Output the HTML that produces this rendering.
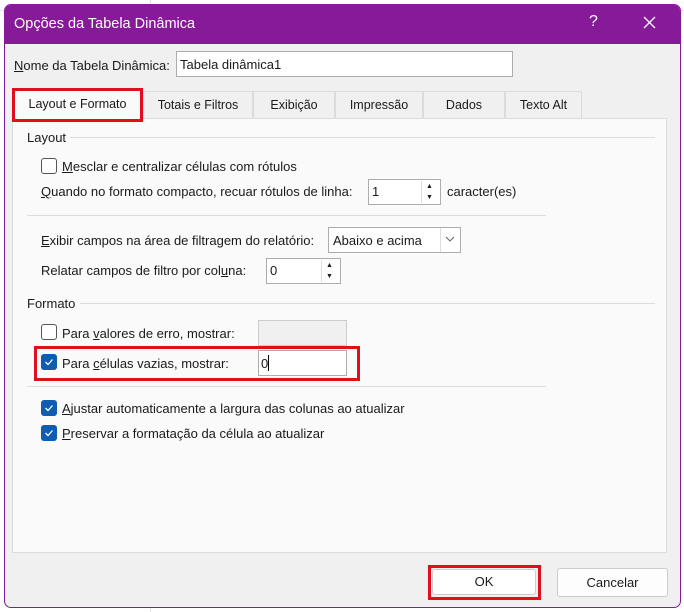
<!DOCTYPE html>
<html><head><meta charset="utf-8"><style>
*{margin:0;padding:0;box-sizing:border-box}
body{width:684px;height:612px;position:relative;overflow:hidden;background:#fff;font-family:"Liberation Sans",sans-serif;font-size:13px;color:#1a1a1a}
.a{position:absolute}
.t{position:absolute;white-space:nowrap;line-height:16px}
u{text-decoration:underline}
.cb{position:absolute;width:16px;height:16px;border:1px solid #555;border-radius:3px;background:#fff}
.cc{position:absolute;width:16px;height:16px;border-radius:3px;background:#0f5cb0}
.cc svg{position:absolute;left:3px;top:3px}
.inp{position:absolute;background:#fff;border:1px solid #adadad}
.tab{position:absolute;top:91px;height:27px;background:#f0f0f0;border:1px solid #dcdcdc;border-bottom:none;text-align:center;line-height:26px;font-size:12.5px}
.line{position:absolute;height:1px;background:#dcdcdc}
.red{position:absolute;border:3px solid #e0101a}
</style></head><body>
<div class="a" style="left:150px;top:0;width:1px;height:612px;background:#e2e2e2"></div>
<div class="a" style="left:0;top:10px;width:684px;height:1px;background:#e2e2e2"></div>
<div class="a" style="left:4px;top:4px;width:677px;height:604px;background:#f0f0f0;border:1px solid #861a99;border-radius:7px;overflow:hidden">
 <div class="a" style="left:0;top:0;width:677px;height:39px;background:#861a99"></div>
</div>
<div class="t" style="left:14px;top:15px;color:#fff;font-size:14.5px;line-height:18px">Opções da Tabela Dinâmica</div>
<div class="t" style="left:589px;top:14px;color:#fff;font-size:16px">?</div>
<svg class="a" style="left:643px;top:16px" width="13" height="13"><path d="M1 1L12 12M12 1L1 12" stroke="#fff" stroke-width="1.3"/></svg>

<div class="t" style="left:14px;top:58px"><u>N</u>ome da Tabela Dinâmica:</div>
<div class="inp" style="left:176px;top:51px;width:337px;height:26px"></div>
<div class="t" style="left:180px;top:57px">Tabela dinâmica1</div>

<div class="a" style="left:12px;top:118px;width:655px;height:435px;background:#fafafa;border:1px solid #dcdcdc"></div>
<div class="tab" style="left:12px;width:131px;top:90px;height:29px;background:#fafafa">Layout e Formato</div>
<div class="tab" style="left:143px;width:110px">Totais e Filtros</div>
<div class="tab" style="left:253px;width:82px">Exibição</div>
<div class="tab" style="left:335px;width:88px">Impressão</div>
<div class="tab" style="left:423px;width:82px">Dados</div>
<div class="tab" style="left:505px;width:77px">Texto Alt</div>
<div class="red" style="left:12px;top:88px;width:131px;height:34px"></div>

<div class="t" style="left:27px;top:130px">Layout</div>
<div class="line" style="left:70px;top:137px;width:585px"></div>
<div class="cb" style="left:41px;top:158px"></div>
<div class="t" style="left:62px;top:159px"><u>M</u>esclar e centralizar células com rótulos</div>
<div class="t" style="left:41px;top:184px"><u>Q</u>uando no formato compacto, recuar rótulos de linha:</div>
<div class="inp" style="left:368px;top:179px;width:73px;height:26px"></div>
<div class="t" style="left:372px;top:184px">1</div>
<div class="a" style="left:421px;top:181px;width:18px;height:22px;border-left:1px solid #ddd"></div>
<div class="t" style="left:426px;top:179px;font-size:7px">▲</div><div class="t" style="left:426px;top:190px;font-size:7px">▼</div>
<div class="t" style="left:447px;top:184px">caracter(es)</div>
<div class="line" style="left:27px;top:215px;width:519px"></div>

<div class="t" style="left:41px;top:233px"><u>E</u>xibir campos na área de filtragem do relatório:</div>
<div class="inp" style="left:328px;top:227px;width:133px;height:26px"></div>
<div class="t" style="left:333px;top:233px">Abaixo e acima</div>
<div class="a" style="left:440px;top:228px;width:1px;height:24px;background:#ddd"></div>
<svg class="a" style="left:445px;top:236px" width="10" height="6"><path d="M1 1L5 5L9 1" stroke="#666" fill="none"/></svg>
<div class="t" style="left:41px;top:263px">Relatar campos de filtro por col<u>u</u>na:</div>
<div class="inp" style="left:266px;top:258px;width:75px;height:26px"></div>
<div class="t" style="left:270px;top:263px">0</div>
<div class="a" style="left:321px;top:260px;width:18px;height:22px;border-left:1px solid #ddd"></div>
<div class="t" style="left:326px;top:258px;font-size:7px">▲</div><div class="t" style="left:326px;top:269px;font-size:7px">▼</div>

<div class="t" style="left:27px;top:296px">Formato</div>
<div class="line" style="left:80px;top:303px;width:575px"></div>
<div class="cb" style="left:41px;top:324px"></div>
<div class="t" style="left:62px;top:326px">Para <u>v</u>alores de erro, mostrar:</div>
<div class="a" style="left:258px;top:320px;width:89px;height:26px;background:#f0f0f0;border:1px solid #ccc"></div>
<div class="cc" style="left:41px;top:354px"><svg width="10" height="10"><path d="M1.5 5L4 7.5L8.5 2.5" stroke="#fff" stroke-width="1.3" fill="none"/></svg></div>
<div class="t" style="left:62px;top:356px">Para <u>c</u>élulas vazias, mostrar:</div>
<div class="inp" style="left:258px;top:350px;width:89px;height:26px"></div>
<div class="t" style="left:261px;top:356px">0</div>
<div class="a" style="left:268px;top:355px;width:1px;height:16px;background:#000"></div>
<div class="red" style="left:34px;top:346px;width:326px;height:35px"></div>
<div class="line" style="left:27px;top:386px;width:519px"></div>
<div class="cc" style="left:41px;top:400px"><svg width="10" height="10"><path d="M1.5 5L4 7.5L8.5 2.5" stroke="#fff" stroke-width="1.3" fill="none"/></svg></div>
<div class="t" style="left:62px;top:401px"><u>A</u>justar automaticamente a largura das colunas ao atualizar</div>
<div class="cc" style="left:41px;top:425px"><svg width="10" height="10"><path d="M1.5 5L4 7.5L8.5 2.5" stroke="#fff" stroke-width="1.3" fill="none"/></svg></div>
<div class="t" style="left:62px;top:426px"><u>P</u>reservar a formatação da célula ao atualizar</div>

<div class="a" style="left:432px;top:569px;width:104px;height:26px;background:#fff;border:1px solid #ccc;border-radius:3px;text-align:center;line-height:24px">OK</div>
<div class="red" style="left:428px;top:565px;width:113px;height:35px"></div>
<div class="a" style="left:557px;top:568px;width:111px;height:29px;background:#fdfdfd;border:1px solid #ccc;border-radius:3px;text-align:center;line-height:27px">Cancelar</div>
</body></html>
